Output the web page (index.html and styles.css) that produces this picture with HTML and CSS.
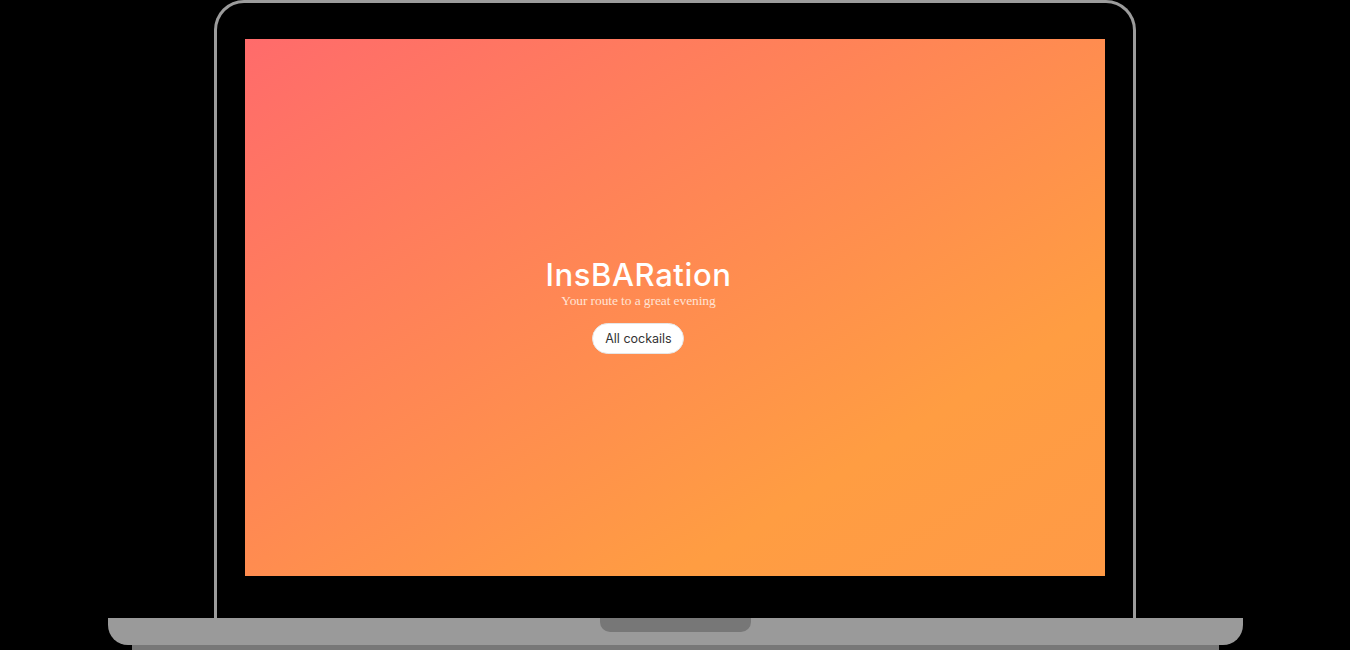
FILE: index.html
```html
<!DOCTYPE html>
<html lang="en">
<head>
<meta charset="utf-8">
<title>InsBARation</title>
<link rel="stylesheet" href="styles.css">
</head>
<body>
<div class="laptop">
  <div class="lid">
    <div class="screen">
      <div class="hero">
        <h1 class="title">InsBARation</h1>
        <p class="subtitle">Your route to a great evening</p>
        <button class="cta">All cockails</button>
      </div>
    </div>
  </div>
  <div class="base"><div class="notch"></div></div>
  <div class="foot"></div>
</div>
</body>
</html>
```

FILE: styles.css
```css
html, body {
  margin: 0;
  padding: 0;
  background: #000;
}
body {
  width: 1350px;
  height: 650px;
  overflow: hidden;
}
.laptop {
  display: flex;
  flex-direction: column;
  align-items: center;
}
.lid {
  box-sizing: border-box;
  width: 922px;
  height: 618px;
  border: 3px solid #9c9c9c;
  border-bottom: none;
  border-radius: 30px 30px 0 0;
  padding: 36px 28px 0 28px;
}
.screen {
  width: 860px;
  height: 537px;
  background: linear-gradient(to bottom right, #ff6b6b 0%, #ff9d42 75%, #ff9a46 100%);
  display: flex;
  align-items: center;
  justify-content: center;
}
.hero {
  display: flex;
  flex-direction: column;
  align-items: center;
  margin-top: -5px;
  margin-right: 73px;
}
.title {
  margin: 0;
  font-family: Inter, "Noto Sans", sans-serif;
  font-weight: 500;
  font-size: 31px;
  line-height: 36px;
  letter-spacing: 0.6px;
  color: #fff;
}
.subtitle {
  margin: 0;
  font-family: "Liberation Serif", serif;
  font-size: 13.5px;
  line-height: 16px;
  color: #ffe3d4;
  letter-spacing: -0.1px;
}
.cta {
  margin-top: 14px;
  box-sizing: border-box;
  width: 92px;
  height: 31px;
  border: 1px solid #e6e6e6;
  border-radius: 16px;
  background: #fff;
  color: #333;
  font-family: Inter, "Noto Sans", sans-serif;
  font-size: 12.5px;
  padding: 0;
}
.base {
  width: 1135px;
  height: 27px;
  background: #9a9a9a;
  border-radius: 0 0 20px 20px;
  display: flex;
  justify-content: center;
}
.notch {
  width: 151px;
  height: 14px;
  background: #777;
  border-radius: 0 0 10px 10px;
}
.foot {
  width: 1087px;
  height: 5px;
  background: #777;
}
```
